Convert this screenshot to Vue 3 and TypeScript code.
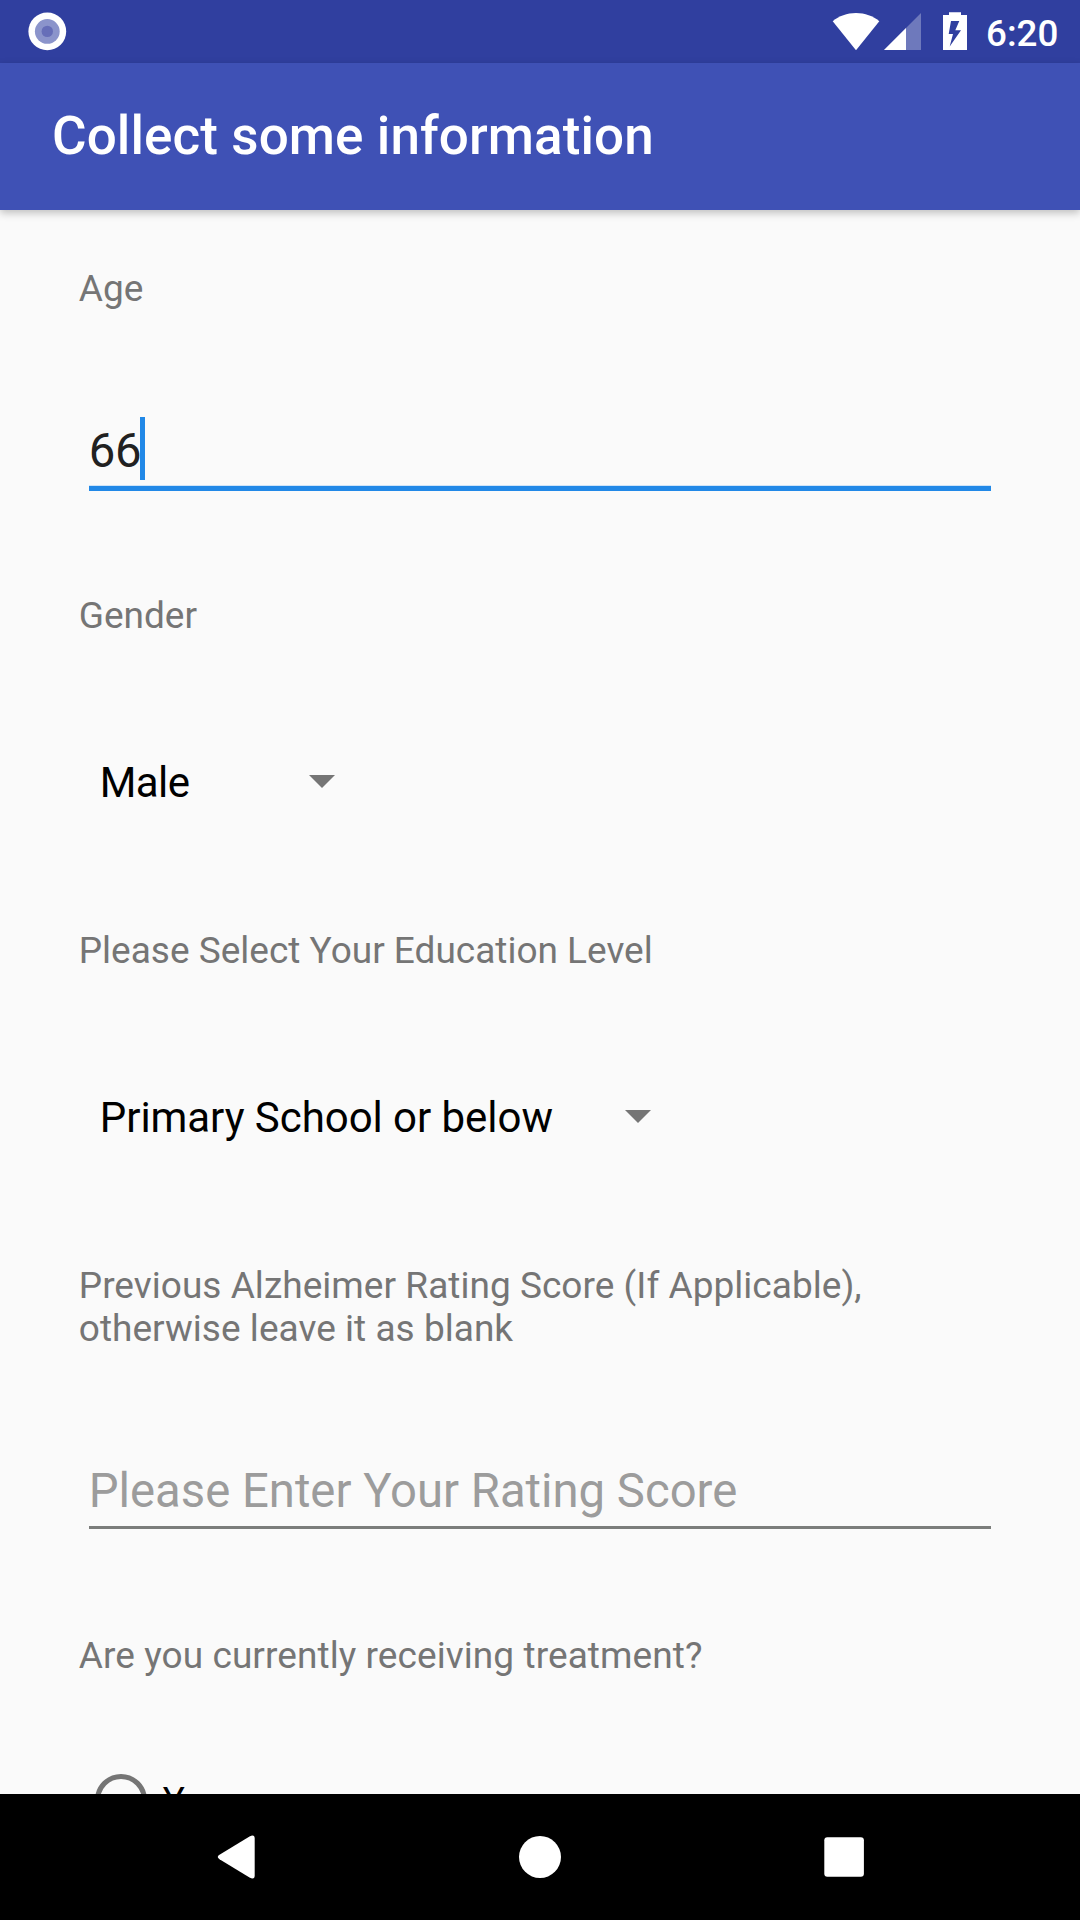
<script setup lang="ts">
import { ref } from 'vue'

const title = 'Collect some information'
const age = ref('66')
const gender = ref('Male')
const education = ref('Primary School or below')
</script>

<template>
  <div class="screen">
    <header class="status">
      <svg class="status-left" width="200" height="63" viewBox="0 0 200 63">
        <circle cx="47.3" cy="31.4" r="18.9" fill="#fff" />
        <circle cx="47.3" cy="31.4" r="12.4" fill="#8b94cb" />
        <circle cx="47.3" cy="31.4" r="5.7" fill="#666eb8" />
      </svg>
      <div class="status-right">
        <svg width="180" height="63" viewBox="800 0 180 63">
          <path d="M856 50.3 832.7 21.2C839 16 847 13 856 13s17 3 23.3 8.200Z" fill="#fff" />
          <path d="M921 13V50H884Z" fill="#fff" fill-opacity=".3" />
          <path d="M906 28V50H884Z" fill="#fff" />
          <path
            d="M949 12.300H961V15H967V50H943V15H949ZM951 21 948.700 34H953L949.700 46.500 961 30.300H955.300L959.300 21Z"
            fill="#fff"
            fill-rule="evenodd"
          />
        </svg>
        <span class="clock">6:20</span>
      </div>
    </header>
    <div class="appbar"><h1>{{ title }}</h1></div>

    <main class="form">
      <label class="label">Age</label>
      <div class="field focused">
        <span class="value">{{ age }}</span><i class="caret"></i>
      </div>

      <label class="label gender">Gender</label>
      <div class="spinner short">
        <span>{{ gender }}</span>
        <svg width="26" height="13" viewBox="0 0 26 13"><path d="M0 0H26L13 13Z" fill="#757575" /></svg>
      </div>

      <label class="label next">Please Select Your Education Level</label>
      <div class="spinner long">
        <span>{{ education }}</span>
        <svg width="26" height="13" viewBox="0 0 26 13"><path d="M0 0H26L13 13Z" fill="#757575" /></svg>
      </div>

      <label class="label next rating">Previous Alzheimer Rating Score (If Applicable), otherwise leave it as blank</label>
      <div class="field idle">
        <span class="hint">Please Enter Your Rating Score</span>
      </div>

      <label class="label treatment">Are you currently receiving treatment?</label>
      <div class="radio">
        <i class="ring"></i>
        <span>Y</span>
      </div>
    </main>

    <nav class="navbar">
      <svg width="1080" height="126" viewBox="0 0 1080 126">
        <path d="M219.500 64.700Q216 62.500 219.500 60.300L249.500 42Q254.700 39.500 254.700 44V81Q254.700 85.500 249.500 83Z" transform="translate(0 .5)" fill="#fff" />
        <circle cx="540" cy="63" r="21" fill="#fff" />
        <rect x="824.300" y="43.200" width="39.600" height="39.600" rx="3" fill="#fff" />
      </svg>
    </nav>
  </div>
</template>

<style>
body {
  margin: 0;
  background: #fafafa;
}
</style>

<style scoped>
.screen {
  display: flex;
  flex-direction: column;
  width: 1080px;
  height: 1920px;
  overflow: hidden;
  background: #fafafa;
  font-family: Roboto, sans-serif;
}
svg {
  display: block;
  flex: none;
}
.status {
  display: flex;
  justify-content: space-between;
  flex: none;
  height: 63px;
  background: #303f9f;
}
.status-right {
  display: flex;
  width: 280px;
}
.clock {
  margin-left: 6px;
  padding-top: 12px;
  font-size: 36.75px;
  line-height: 43px;
  font-weight: 500;
  color: #fff;
}
.appbar {
  display: flex;
  align-items: center;
  flex: none;
  box-sizing: border-box;
  height: 147px;
  padding: 0 0 1px 52px;
  background: #3f51b5;
  box-shadow: 0 3px 8px rgba(0, 0, 0, 0.24);
  z-index: 1;
}
h1 {
  margin: 0;
  font-size: 53px;
  line-height: 62px;
  font-weight: 500;
  letter-spacing: 0.09px;
  color: #fff;
}
.form {
  display: flex;
  flex-direction: column;
  flex: 1;
  min-height: 0;
  overflow: hidden;
  padding: 57px 78.75px 0;
}
.label {
  flex: none;
  font-size: 37px;
  line-height: 43px;
  color: #757575;
}
.field {
  display: flex;
  flex: none;
  box-sizing: border-box;
  margin: 107px 10px 0;
  font-size: 47.25px;
  line-height: 55px;
}
.focused {
  height: 74px;
  border-bottom: 5px solid #2188e7;
  box-shadow: inset 0 -1px #cfe4f8;
}
.value {
  padding-top: 7px;
  color: #212121;
  letter-spacing: -0.4px;
}
.caret {
  width: 5px;
  height: 63px;
  margin-left: -1.2px;
  background: #2188e7;
}
.gender {
  margin-top: 103px;
}
.spinner {
  display: flex;
  align-items: center;
  justify-content: space-between;
  flex: none;
  height: 49px;
  margin: 121px 0 0 21px;
  font-size: 42px;
  line-height: 49px;
  color: #000;
}
.spinner svg {
  margin-bottom: 2px;
}
.short {
  width: 234.9px;
  letter-spacing: -0.6px;
}
.long {
  width: 550.9px;
  letter-spacing: -0.05px;
}
.next {
  margin-top: 122px;
}
.rating {
  letter-spacing: 0.035px;
}
.idle {
  height: 66px;
  margin-top: 113px;
  border-bottom: 3px solid #7b7d7b;
}
.hint {
  padding-top: 1px;
  color: #9c9c9c;
}
.treatment {
  margin-top: 105px;
  letter-spacing: 0.08px;
}
.radio {
  display: flex;
  flex: none;
  align-items: center;
  margin: 97px 0 0 16.500px;
  font-size: 36.75px;
  line-height: 43px;
}
.ring {
  box-sizing: border-box;
  width: 52px;
  height: 52px;
  margin-right: 15.500px;
  border: 5.25px solid #757575;
  border-radius: 50%;
}
.navbar {
  flex: none;
  height: 126px;
  background: #000;
}
</style>
